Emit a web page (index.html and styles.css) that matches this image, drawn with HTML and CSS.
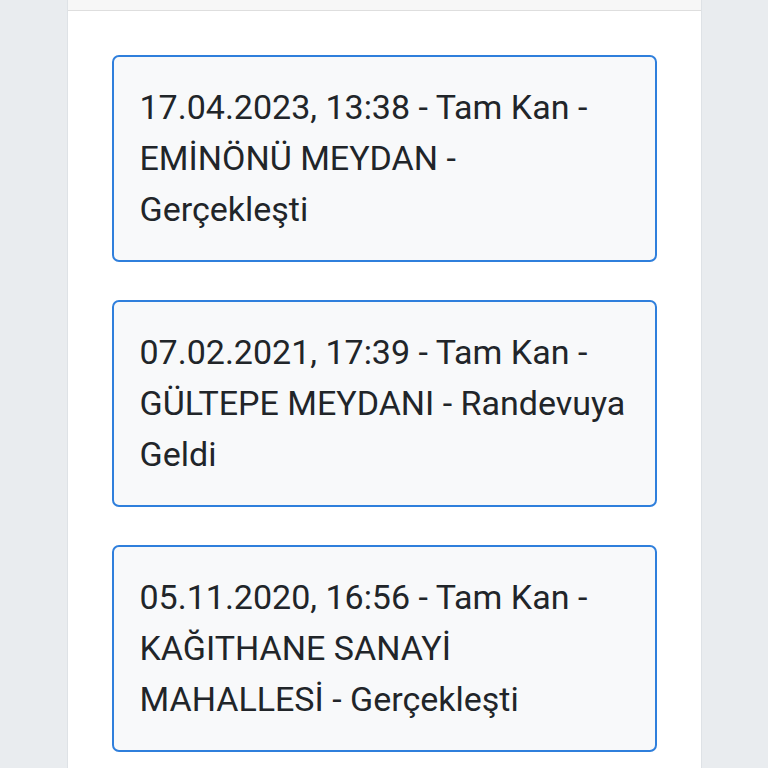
FILE: index.html
```html
<!DOCTYPE html>
<html lang="tr">
<head>
  <meta charset="UTF-8">
  <title>Bağış Geçmişi</title>
  <link rel="stylesheet" href="styles.css">
</head>
<body>
  <div class="panel">
    <div class="panel-header"></div>
    <div class="panel-body">
      <div class="entry">17.04.2023, 13:38 - Tam Kan - EMİNÖNÜ MEYDAN - Gerçekleşti</div>
      <div class="entry">07.02.2021, 17:39 - Tam Kan - GÜLTEPE MEYDANI - Randevuya Geldi</div>
      <div class="entry">05.11.2020, 16:56 - Tam Kan - KAĞITHANE SANAYİ MAHALLESİ - Gerçekleşti</div>
    </div>
  </div>
</body>
</html>
```

FILE: styles.css
```css
body {
  margin: 0;
  background: #e9ecef;
  font-family: Roboto, "Noto Sans", sans-serif;
  color: #212529;
}
.panel {
  width: 633px;
  margin: 0 auto;
  background: #fff;
  border-left: 1px solid #dee2e6;
  border-right: 1px solid #dee2e6;
  min-height: 768px;
}
.panel-header {
  height: 10px;
  background: #f7f7f7;
  border-bottom: 1px solid #dedede;
}
.panel-body {
  padding: 44px 44px 0;
}
.entry {
  background: #f8f9fa;
  border: 2px solid #2f7fdc;
  border-radius: 7px;
  padding: 25px 26px;
  margin-bottom: 38px;
  font-size: 34px;
  line-height: 51px;
}
```
